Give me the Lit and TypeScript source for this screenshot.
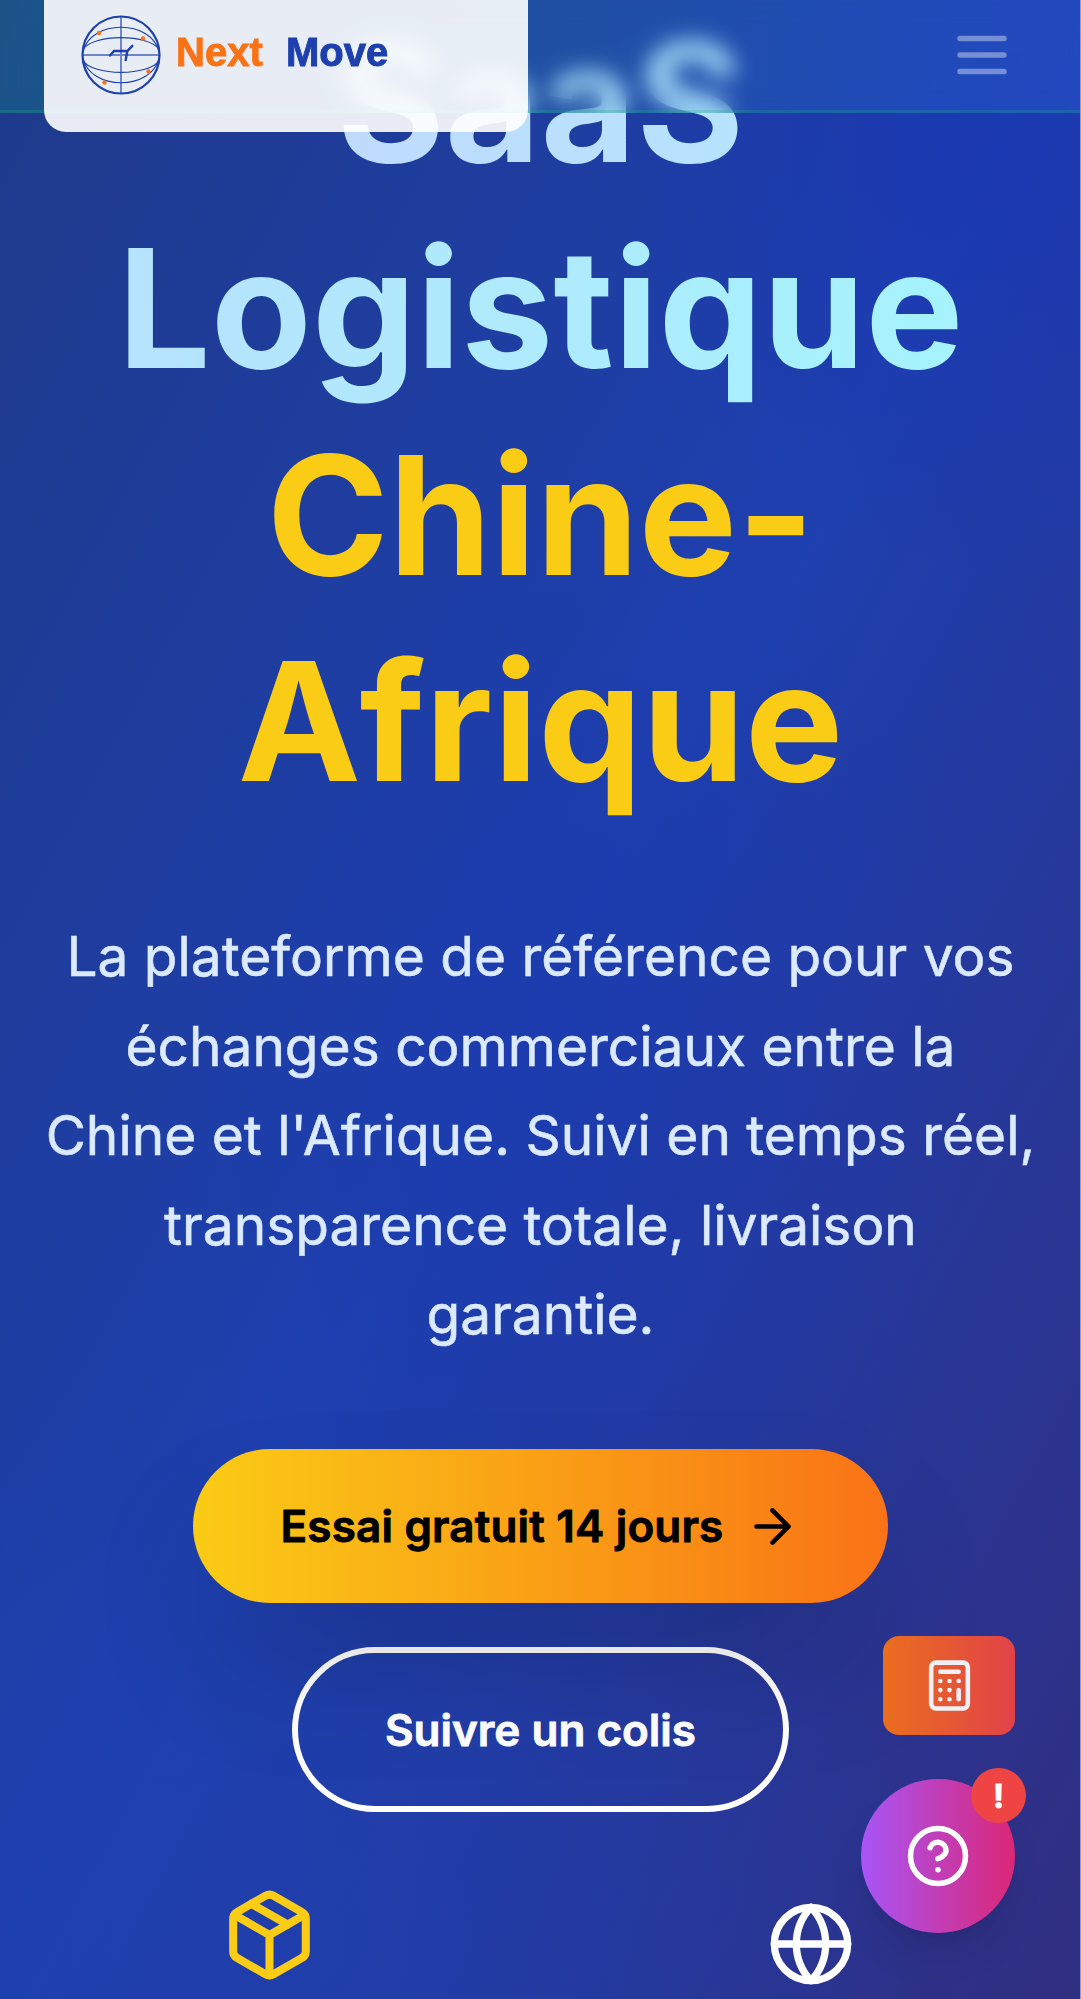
import { LitElement, html, css } from "lit";
import { customElement } from "lit/decorators.js";

@customElement("app-root")
export class AppRoot extends LitElement {
  static styles = css`
    :host {
      display: block;
      font-family: Inter, "Noto Sans", sans-serif;
    }
    .page {
      position: relative;
      box-sizing: border-box;
      width: 1081px;
      height: 1999px;
      overflow: hidden;
      border-right: 1px solid #8f9bd0;
      background:
        radial-gradient(circle 420px at 1010px 160px, rgba(20, 40, 185, 0.3), transparent),
        radial-gradient(ellipse 420px 620px at 560px 1080px, rgba(26, 56, 175, 0.5), transparent),
        radial-gradient(circle 620px at 300px 1950px, rgba(30, 64, 175, 0.7), transparent),
        linear-gradient(to bottom right, #1e3a8a, #1e40af 50%, #312e81);
    }
    .header {
      position: absolute;
      z-index: 10;
      top: 0;
      left: 0;
      right: 0;
      height: 113px;
      box-sizing: border-box;
      padding: 0 65px 0 44px;
      display: flex;
      justify-content: space-between;
      border-bottom: 3px solid rgba(16, 185, 129, 0.25);
      background: linear-gradient(to right, rgba(16, 185, 129, 0.2), rgba(59, 130, 246, 0.2));
      backdrop-filter: blur(11px);
    }
    .logo-card {
      width: 484px;
      height: 132px;
      border-radius: 0 0 22px 22px;
      background: rgba(255, 255, 255, 0.9);
    }
    .logo-card svg { display: block; }
    .burger { align-self: center; width: 66px; height: 66px; }
    .hero {
      padding: 0 43px 0 44px;
      margin-top: -1px;
      display: flex;
      flex-direction: column;
      align-items: center;
      text-align: center;
    }
    .title {
      margin: 0;
      width: 100%;
      font-size: 165px;
      line-height: 206.25px;
      font-weight: 700;
    }
    .title-main {
      color: transparent;
      background: linear-gradient(to right, #bfdbfe, #a5f3fc);
      -webkit-background-clip: text;
      background-clip: text;
    }
    .title-accent { display: block; color: #facc15; }
    .lead {
      margin: 88.400px 0 0;
      font-size: 55px;
      line-height: 89.375px;
      color: #dbeafe;
      -webkit-text-stroke: 0.600px #dbeafe;
    }
    .actions {
      margin-top: 90px;
      display: flex;
      flex-direction: column;
      align-items: center;
      gap: 44px;
    }
    .btn {
      display: flex;
      align-items: center;
      gap: 22px;
      height: 154px;
      padding: 0 88px;
      border-radius: 80px;
      font-size: 44px;
      font-weight: 600;
      white-space: nowrap;
      -webkit-text-stroke: 0.900px currentColor;
    }
    .primary {
      position: relative;
      z-index: 1;
      color: #000;
      letter-spacing: 0.170px;
      background: linear-gradient(to right, #facc15, #f97316);
      box-shadow: 0 69px 137px -33px rgba(0, 0, 0, 0.25);
    }
    .secondary {
      height: 153px;
      padding: 0 87px;
      color: #fff;
      border: 6px solid #fff;
      border-radius: 83px;
    }
    .stats {
      width: 100%;
      margin-top: 88px;
      display: grid;
      grid-template-columns: 1fr 1fr;
      gap: 88px;
      justify-items: center;
    }
    .stat { width: 88px; height: 88px; }
    .stat.package { transform: translate(-0.500px, -9px) scale(1.1); }
    .calc {
      position: absolute;
      z-index: 5;
      left: 883px;
      top: 1636px;
      width: 132px;
      height: 99px;
      border-radius: 16px;
      display: grid;
      place-items: center;
      background: linear-gradient(to right, #f97316, #ef4444);
      opacity: 0.93;
    }
    .help {
      position: absolute;
      z-index: 5;
      left: 861px;
      top: 1779px;
      width: 154px;
      height: 154px;
      border-radius: 50%;
      display: grid;
      place-items: center;
      background: linear-gradient(to right, #a855f7, #db2777);
      box-shadow: 0 27px 41px -8px rgba(0, 0, 0, 0.1), 0 11px 16px -11px rgba(0, 0, 0, 0.1);
    }
    .alert {
      position: absolute;
      top: -11px;
      right: -11px;
      width: 55px;
      height: 55px;
      border-radius: 50%;
      display: grid;
      place-items: center;
      background: #ef4444;
      color: #fff;
      font-size: 33px;
      font-weight: 700;
      -webkit-text-stroke: 0.800px #fff;
    }
    .icon { fill: none; stroke: currentColor; stroke-width: 2; stroke-linecap: round; stroke-linejoin: round; display: block; }
    .yellow { color: #facc15; }
    .white { color: #fff; }
    .faded { color: rgba(255, 255, 255, 0.38); }
    .word { font: 700 40px "Liberation Sans", Arial, sans-serif; stroke-width: 0.900px; }
    .word-next { fill: #f97316; stroke: #f97316; }
    .word-move { fill: #1e40af; stroke: #1e40af; }
  `;

  render() {
    return html`
      <div class="page">
        <header class="header">
          <div class="logo-card">
            <svg width="484" height="132" viewBox="44 0 484 132">
              <g fill="none" stroke="#1e40af">
                <circle cx="121" cy="55" r="38.500" stroke-width="2.200" />
                <path d="M82.500 50C92 33.500 150 33.500 159.500 50M82.500 60C92 76.500 150 76.500 159.500 60" stroke-width="1.200" />
                <path d="M83 52C90 19 152 19 159 52M83 58C90 91 152 91 159 58" stroke-width="1.200" />
                <path d="M82 55H160M121 16V94" stroke-width="2" opacity=".6" />
                <path d="M110 55.500L114 51H127.300L132.300 45.800M127.300 51L125.700 60" stroke-width="2.400" stroke-linecap="round" />
              </g>
              <g fill="#f97316">
                <circle cx="99" cy="33" r="2.200" /><circle cx="143" cy="38.500" r="2.200" />
                <circle cx="148.500" cy="71.500" r="2.200" /><circle cx="104.500" cy="82.500" r="2.200" />
              </g>
              <text class="word word-next" x="176" y="66">Next</text>
              <text class="word word-move" x="286" y="66">Move</text>
            </svg>
          </div>
          <svg class="icon burger faded" viewBox="0 0 24 24"><path d="M4 6h16M4 12h16M4 18h16" /></svg>
        </header>

        <main class="hero">
          <h1 class="title">
            <span class="title-main">SaaS<br />Logistique</span>
            <span class="title-accent">Chine-<br />Afrique</span>
          </h1>
          <p class="lead">
            La plateforme de référence pour vos échanges commerciaux entre la
            Chine et l'Afrique. Suivi en temps réel, transparence totale, livraison garantie.
          </p>
          <div class="actions">
            <div class="btn primary">
              Essai gratuit 14 jours
              <svg class="icon" width="55" height="55" viewBox="0 0 24 24"><path d="M5 12h14M12 5l7 7-7 7" /></svg>
            </div>
            <div class="btn secondary">Suivre un colis</div>
          </div>
          <div class="stats">
            <svg class="icon stat package yellow" viewBox="0 0 24 24">
              <path d="m7.500 4.270 9 5.150" />
              <path d="M21 8a2 2 0 0 0-1-1.730l-7-4a2 2 0 0 0-2 0l-7 4A2 2 0 0 0 3 8v8a2 2 0 0 0 1 1.730l7 4a2 2 0 0 0 2 0l7-4A2 2 0 0 0 21 16Z" />
              <path d="m3.300 7 8.700 5 8.700-5M12 22V12" />
            </svg>
            <svg class="icon stat white" viewBox="0 0 24 24">
              <circle cx="12" cy="12" r="10" />
              <path d="M12 2a14.500 14.500 0 0 0 0 20 14.500 14.500 0 0 0 0-20M2 12h20" />
            </svg>
          </div>
        </main>

        <div class="calc">
          <svg class="icon white" width="55" height="55" viewBox="0 0 24 24">
            <rect width="16" height="20" x="4" y="2" rx="2" />
            <path d="M8 6h8M16 14v4M16 10h.01M12 10h.01M8 10h.01M12 14h.01M8 14h.01M12 18h.01M8 18h.01" />
          </svg>
        </div>
        <div class="help">
          <svg class="icon white" width="66" height="66" viewBox="0 0 24 24">
            <circle cx="12" cy="12" r="10" />
            <path d="M9.090 9a3 3 0 0 1 5.830 1c0 2-3 3-3 3M12 17h.01" />
          </svg>
          <span class="alert">!</span>
        </div>
      </div>
    `;
  }
}
